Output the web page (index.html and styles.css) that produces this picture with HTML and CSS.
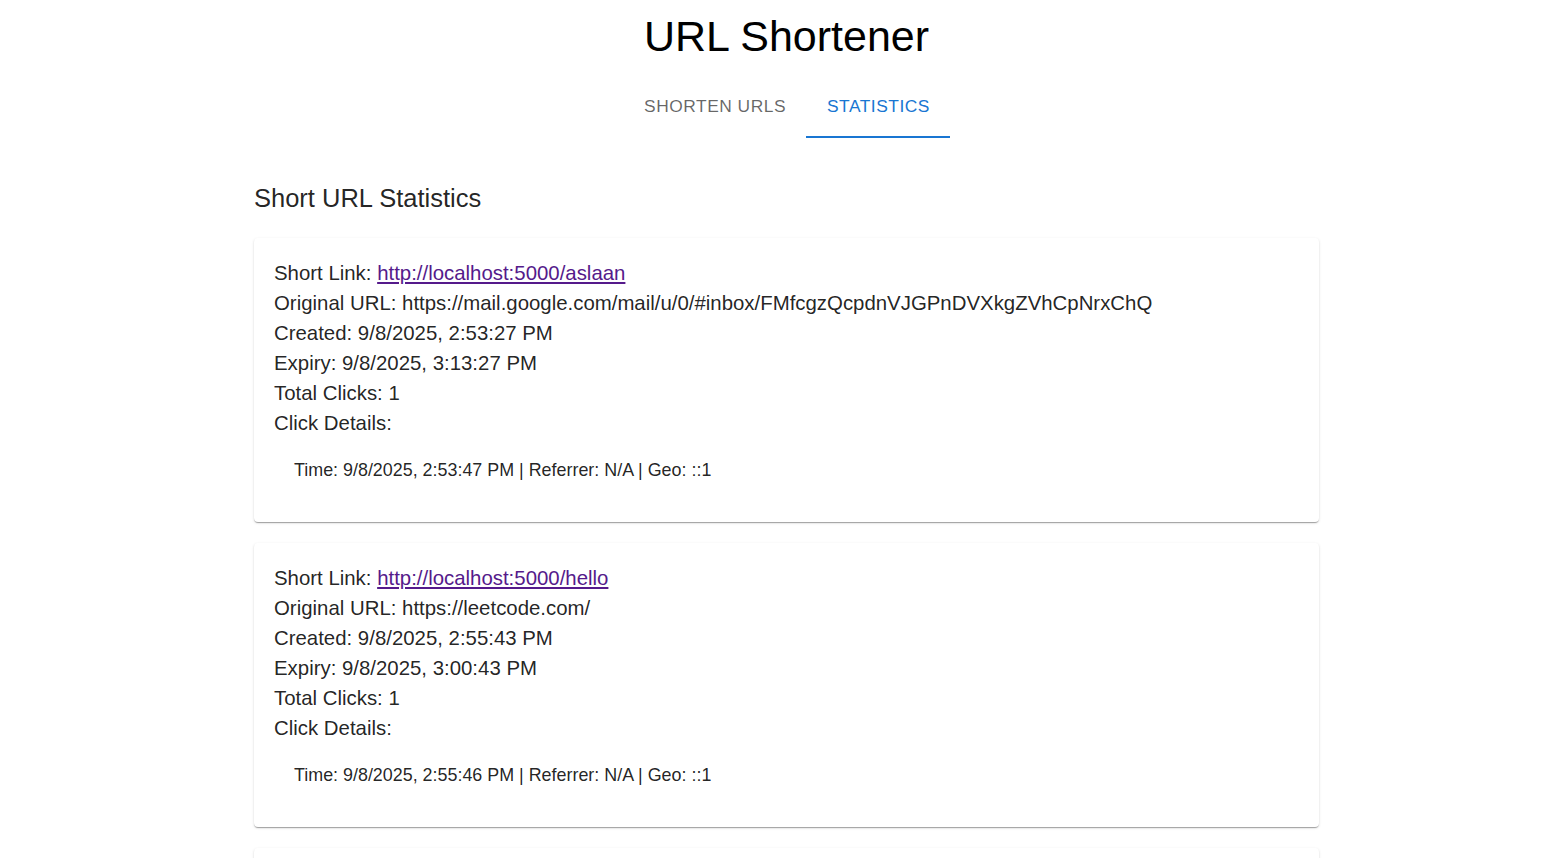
FILE: index.html
```html
<!DOCTYPE html>
<html lang="en">
<head>
<meta charset="utf-8">
<title>URL Shortener</title>
<link rel="stylesheet" href="styles.css">
</head>
<body>
<div class="page">
  <h1 class="title">URL Shortener</h1>
  <nav class="tabs">
    <div class="tab">SHORTEN URLS</div>
    <div class="tab tab-active">STATISTICS</div>
  </nav>
  <main class="content">
    <h2 class="section-title">Short URL Statistics</h2>

    <section class="card">
      <p class="line">Short Link: <a class="link" href="#">http://localhost:5000/aslaan</a></p>
      <p class="line">Original URL: https://mail.google.com/mail/u/0/#inbox/FMfcgzQcpdnVJGPnDVXkgZVhCpNrxChQ</p>
      <p class="line">Created: 9/8/2025, 2:53:27 PM</p>
      <p class="line">Expiry: 9/8/2025, 3:13:27 PM</p>
      <p class="line">Total Clicks: 1</p>
      <p class="line">Click Details:</p>
      <ul class="clicks">
        <li class="click">Time: 9/8/2025, 2:53:47 PM | Referrer: N/A | Geo: ::1</li>
      </ul>
    </section>

    <section class="card">
      <p class="line">Short Link: <a class="link" href="#">http://localhost:5000/hello</a></p>
      <p class="line">Original URL: https://leetcode.com/</p>
      <p class="line">Created: 9/8/2025, 2:55:43 PM</p>
      <p class="line">Expiry: 9/8/2025, 3:00:43 PM</p>
      <p class="line">Total Clicks: 1</p>
      <p class="line">Click Details:</p>
      <ul class="clicks">
        <li class="click">Time: 9/8/2025, 2:55:46 PM | Referrer: N/A | Geo: ::1</li>
      </ul>
    </section>

    <section class="card">
      <p class="line">Short Link: <a class="link" href="#">http://localhost:5000/test</a></p>
      <p class="line">Original URL: https://example.com/</p>
      <p class="line">Created: 9/8/2025, 2:57:10 PM</p>
      <p class="line">Expiry: 9/8/2025, 3:27:10 PM</p>
      <p class="line">Total Clicks: 0</p>
      <p class="line">Click Details:</p>
    </section>
  </main>
</div>
</body>
</html>
```

FILE: styles.css
```css
html, body {
  margin: 0;
  padding: 0;
  background: #ffffff;
}

body {
  font-family: "Liberation Sans", Arial, sans-serif;
  color: rgba(0, 0, 0, 0.87);
}

.page {
  padding: 11px 0 0 26px;
  display: flex;
  flex-direction: column;
  align-items: center;
}

.title {
  margin: 0;
  font-size: 43px;
  line-height: 50px;
  font-weight: 400;
  color: #000;
}

.tabs {
  display: flex;
  margin-top: 14px;
}

.tab {
  height: 63px;
  box-sizing: border-box;
  padding: 2px 20px 0 21px;
  display: flex;
  align-items: center;
  font-size: 17.4px;
  line-height: 19px;
  letter-spacing: 0.02857em;
  color: rgba(0, 0, 0, 0.6);
  border-bottom: 2px solid transparent;
}

.tab-active {
  color: #1976d2;
  border-bottom-color: #1976d2;
}

.content {
  width: 1065px;
  margin-top: 43px;
}

.section-title {
  margin: 0 0 23px 0;
  font-size: 25.5px;
  line-height: 34px;
  font-weight: 400;
  color: rgba(0, 0, 0, 0.87);
}

.card {
  background: #fff;
  border-radius: 4px;
  box-shadow: 0px 2px 1px -1px rgba(0, 0, 0, 0.2), 0px 1px 1px 0px rgba(0, 0, 0, 0.14), 0px 1px 3px 0px rgba(0, 0, 0, 0.12);
  padding: 20px;
  margin-bottom: 21px;
}

.line {
  margin: 0;
  font-size: 20.4px;
  line-height: 30px;
}

.link {
  color: #551a8b;
  text-decoration: underline;
}

.clicks {
  list-style: none;
  margin: 20px 0;
  padding: 0 0 0 20px;
}

.click {
  font-size: 17.9px;
  line-height: 24px;
}
```
